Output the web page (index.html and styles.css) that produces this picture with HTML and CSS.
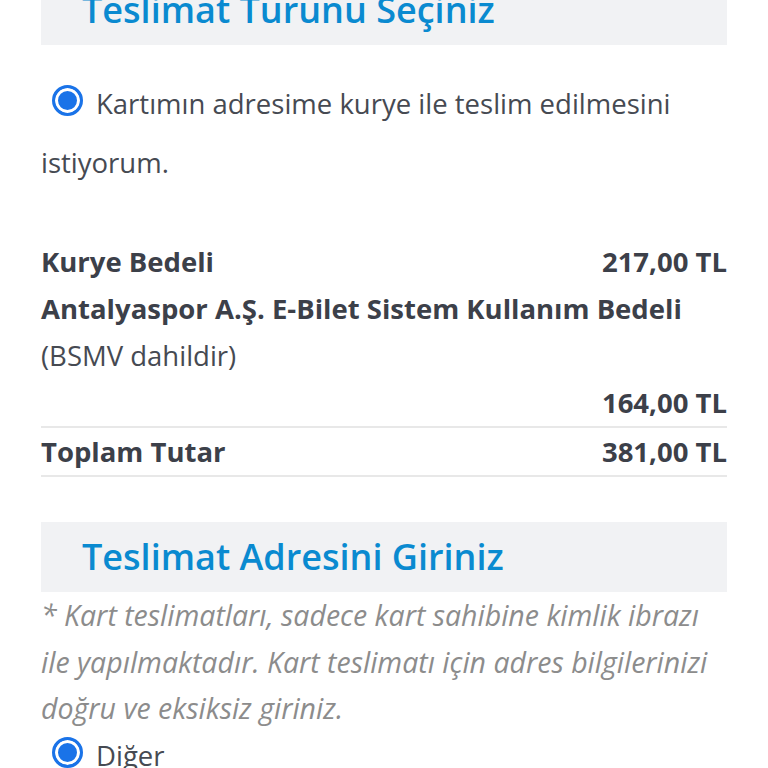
FILE: index.html
```html
<!DOCTYPE html>
<html lang="tr">
<head>
    <meta charset="UTF-8">
    <meta name="viewport" content="width=device-width, initial-scale=1.0">
    <title>Teslimat</title>
    <link rel="stylesheet" href="styles.css">
</head>
<body>
    <div class="page">
        <div class="section-head first">
            <h2>Teslimat Türünü Seçiniz</h2>
        </div>

        <p class="choice">
            <span class="radio"></span>Kartımın adresime kurye ile teslim edilmesini istiyorum.
        </p>

        <div class="fees">
            <div class="fee-row">
                <span class="label">Kurye Bedeli</span>
                <span class="amount">217,00 TL</span>
            </div>
            <div class="fee-block">
                <div class="label">Antalyaspor A.Ş. E-Bilet Sistem Kullanım Bedeli</div>
                <div class="note">(BSMV dahildir)</div>
                <div class="amount right">164,00 TL</div>
            </div>
            <div class="fee-row total">
                <span class="label">Toplam Tutar</span>
                <span class="amount">381,00 TL</span>
            </div>
        </div>

        <div class="section-head">
            <h2>Teslimat Adresini Giriniz</h2>
        </div>

        <p class="hint">* Kart teslimatları, sadece kart sahibine kimlik ibrazı ile yapılmaktadır. Kart teslimatı için adres bilgilerinizi doğru ve eksiksiz giriniz.</p>

        <p class="choice small">
            <span class="radio"></span>Diğer
        </p>
    </div>
</body>
</html>
```

FILE: styles.css
```css
body {
    margin: 0;
    background: #fff;
    font-family: "Open Sans", "Noto Sans", sans-serif;
    color: #3c4049;
}
.page {
    padding: 0 41px;
}
.section-head {
    background-color: #f1f2f4;
    height: 70px;
    padding-left: 41px;
}
.section-head.first {
    margin-top: -25px;
}
.section-head h2 {
    margin: 0;
    font-size: 36px;
    line-height: 70px;
    font-weight: 600;
    color: #0a8ad0;
}
.choice {
    margin: 29px 0 0;
    font-size: 27.5px;
    line-height: 59px;
    color: #464a52;
}
.radio {
    display: inline-block;
    box-sizing: border-box;
    width: 31px;
    height: 31px;
    margin: 0 13px 0 11px;
    border: 3px solid #1a73e8;
    border-radius: 50%;
    background: #1a73e8;
    box-shadow: inset 0 0 0 3px #fff;
    vertical-align: -2px;
}
.fees {
    margin-top: 46px;
    font-size: 27.5px;
    line-height: 47px;
}
.fee-row {
    display: flex;
    justify-content: space-between;
}
.label, .amount {
    font-weight: 700;
}
.note {
    color: #464a52;
}
.right {
    text-align: right;
}
.fee-block {
    border-bottom: 2px solid #e8e8e8;
}
.total {
    border-bottom: 2px solid #e8e8e8;
}
.fees + .section-head {
    margin-top: 45px;
}
.hint {
    margin: 0;
    font-size: 28.5px;
    line-height: 46.5px;
    font-style: italic;
    color: #8c8c8c;
}
.choice.small {
    margin-top: 0;
    line-height: 48px;
}
```
